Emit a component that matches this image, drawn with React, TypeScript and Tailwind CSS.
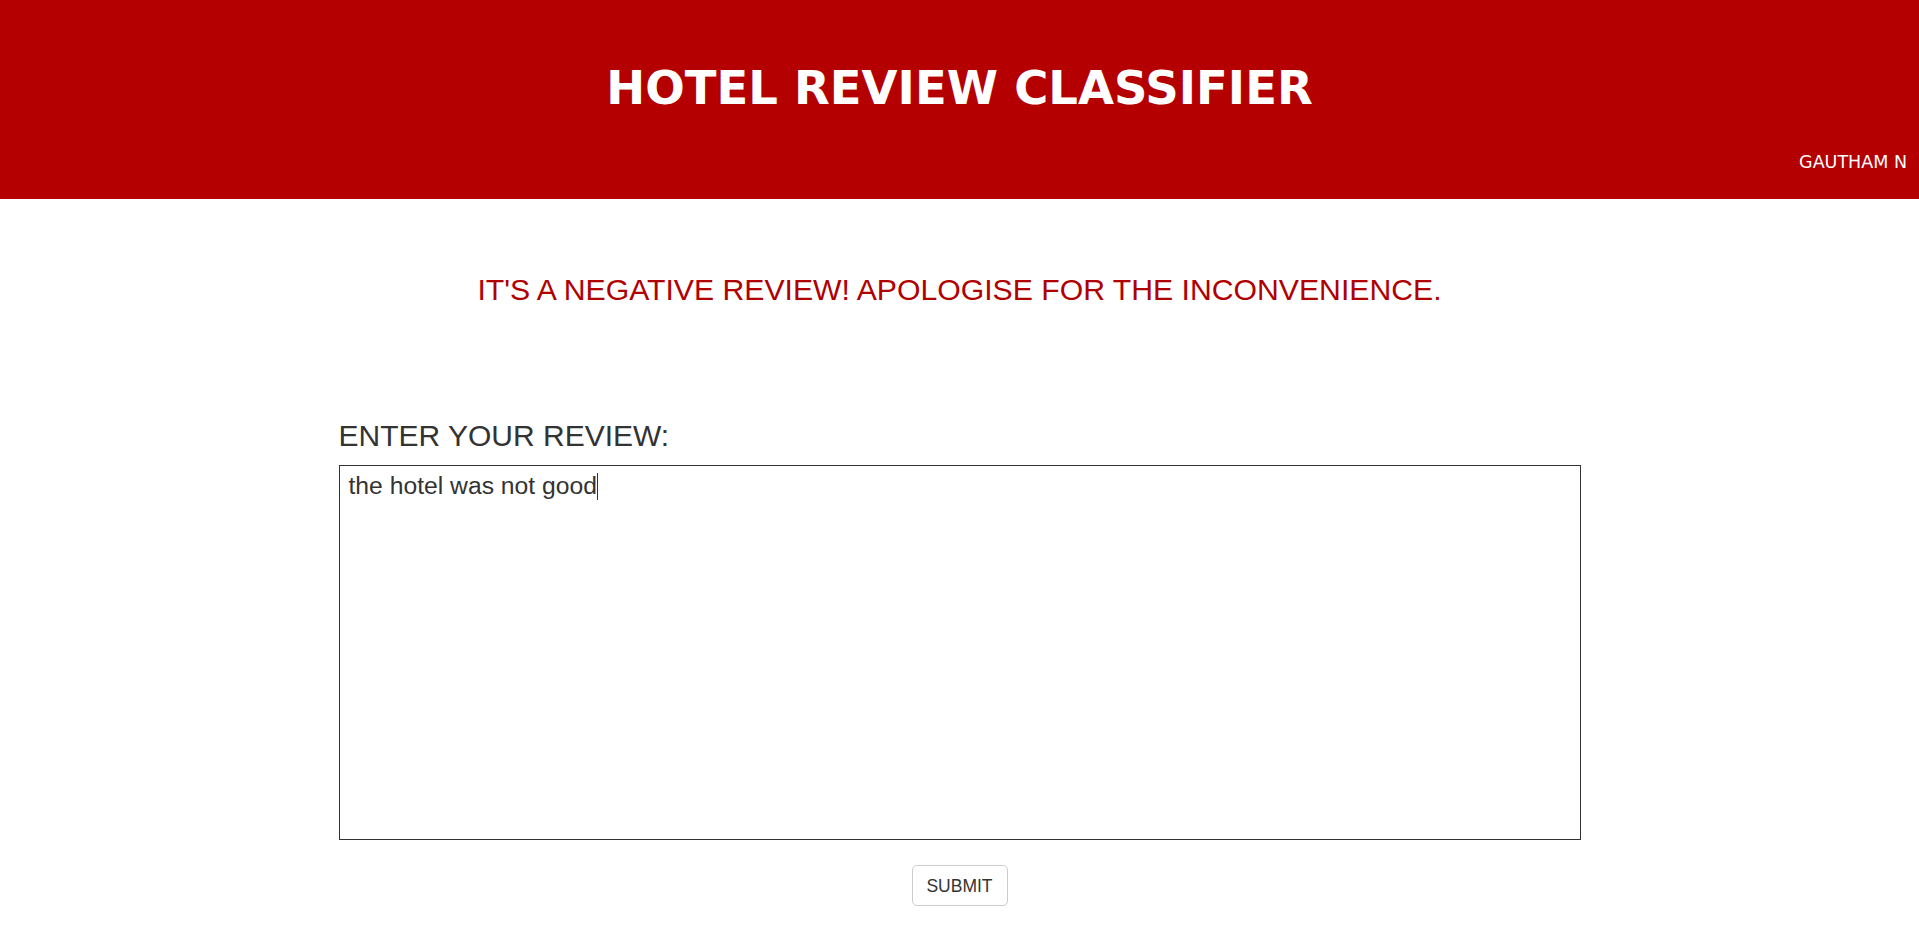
import React from "react";

export default function App() {
  return (
    <div className="min-h-screen bg-white">
      <header className="h-[199px] bg-[#b40000] pt-[61px] flex flex-col">
        <h1 className="text-center text-white font-bold text-[46.5px] leading-[54px] m-0 font-['DejaVu_Sans',Verdana,sans-serif]">
          HOTEL REVIEW CLASSIFIER
        </h1>
        <div className="mt-[37px] pr-[12px] text-right text-white text-[17.5px] leading-[20px] font-['DejaVu_Sans',Verdana,sans-serif]">
          GAUTHAM N
        </div>
      </header>

      <main className="flex flex-col items-center font-['Liberation_Sans',Arial,sans-serif]">
        <p className="mt-[74px] text-[30.2px] leading-[34px] text-[#b00000] text-center">
          IT'S A NEGATIVE REVIEW! APOLOGISE FOR THE INCONVENIENCE.
        </p>

        <div className="mt-[112px] w-[1242px] flex flex-col">
          <label className="text-[30px] leading-[34px] text-[#333333]">ENTER YOUR REVIEW:</label>
          <div
            role="textbox"
            className="mt-[12px] h-[375px] w-full border border-[#333333] pl-[9px] pt-[6px] text-[24.7px] leading-[28px] text-[#333333] bg-white"
          >
            the hotel was not good
            <span className="inline-block w-px h-[27px] bg-[#333333] align-[-6px]" />
          </div>
        </div>

        <button className="mt-[25px] w-[96px] h-[41px] flex items-center justify-center border border-[#cccccc] rounded-[5px] bg-white text-[17.5px] leading-[20px] text-[#333333]">
          SUBMIT
        </button>
      </main>
    </div>
  );
}
